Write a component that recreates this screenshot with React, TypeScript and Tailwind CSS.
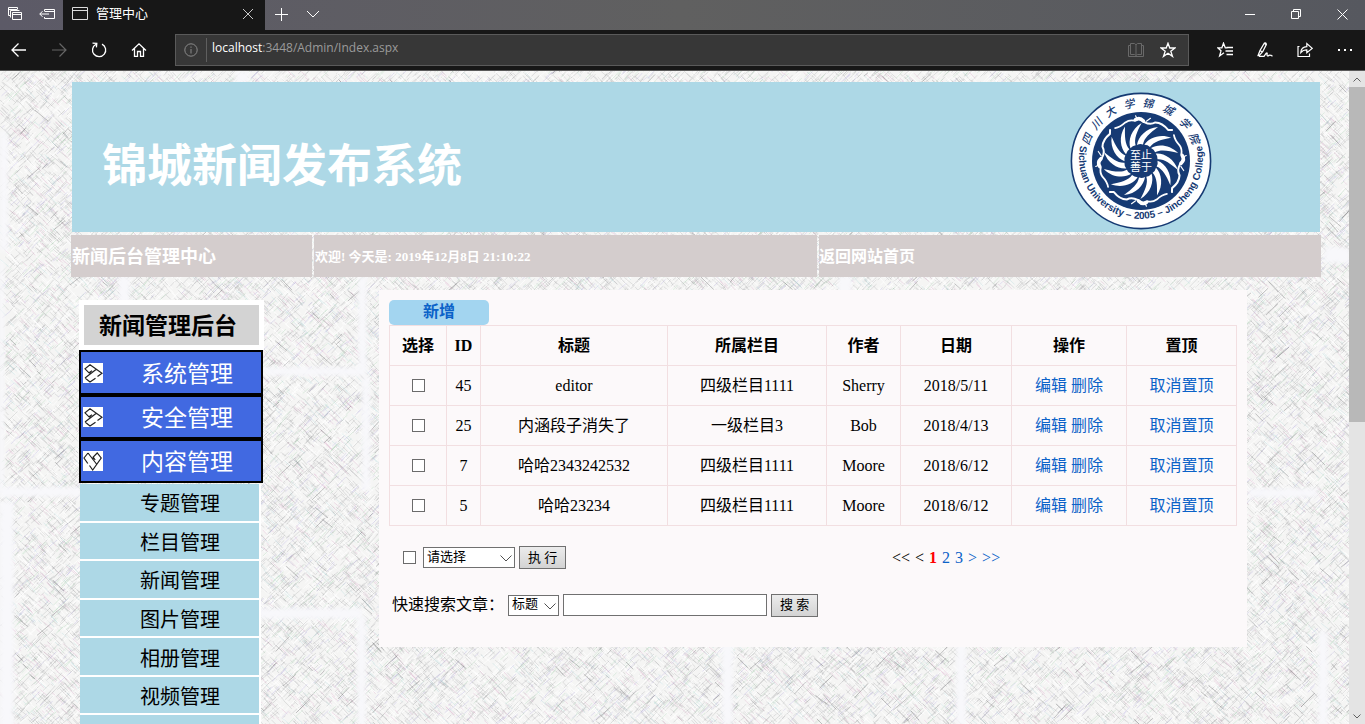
import React from "react";

const PAGE_FONT = "font-['Liberation_Serif','Noto_Sans_CJK_SC',serif]";
const UI_FONT = "font-['Open_Sans','Noto_Sans_CJK_SC',sans-serif]";

/* ---------- sketched wall texture ---------- */

const TILE_W = 1349;
const TILE_H = 654;

function makeStrokes(seed: number, count: number, slope: number, min: number, max: number) {
  let s = seed;
  const rnd = () => {
    s = (s * 1664525 + 1013904223) % 4294967296;
    return s / 4294967296;
  };
  let d = "";
  for (let i = 0; i < count; i++) {
    const x = rnd() * TILE_W;
    const y = rnd() * TILE_H;
    const len = min + rnd() * (max - min);
    const k = slope * (0.8 + rnd() * 0.35);
    d += `M${x.toFixed(1)} ${y.toFixed(1)}l${len.toFixed(1)} ${(len * k).toFixed(1)}`;
  }
  return d;
}

const STROKES = [
  { d: makeStrokes(11, 14000, 1, 3, 11), color: "#9a9b9e", opacity: 0.3 },
  { d: makeStrokes(23, 14000, -1, 3, 11), color: "#9a9b9e", opacity: 0.3 },
  { d: makeStrokes(71, 13000, 1, 3, 11), color: "#ffffff", opacity: 0.75 },
  { d: makeStrokes(79, 13000, -1, 3, 11), color: "#ffffff", opacity: 0.75 },
  { d: makeStrokes(37, 5000, 1, 2, 9), color: "#dba6c6", opacity: 0.36 },
  { d: makeStrokes(41, 5000, -1, 2, 9), color: "#a0d0ac", opacity: 0.32 },
  { d: makeStrokes(53, 5000, -1, 2, 9), color: "#b3abdf", opacity: 0.36 },
  { d: makeStrokes(67, 4000, 1, 2, 9), color: "#a6d5d8", opacity: 0.32 },
  { d: makeStrokes(131, 4000, 1, 3, 10), color: "#86878b", opacity: 0.24 },
  { d: makeStrokes(149, 4000, -1, 3, 10), color: "#86878b", opacity: 0.24 },
  { d: makeStrokes(83, 450, 1, 4, 14), color: "#4a4a4e", opacity: 0.36 },
  { d: makeStrokes(97, 450, -1, 4, 14), color: "#4a4a4e", opacity: 0.36 },
];

const MORTAR: [number, number, number, number][] = [
  [0, 60, 8, 120],
  [0, 190, 4, 230],
  [118, 205, 12, 90],
  [235, 0, 14, 12],
  [358, 205, 9, 95],
  [262, 296, 104, 9],
  [362, 305, 8, 115],
  [0, 416, 82, 10],
  [0, 430, 14, 230],
  [258, 537, 104, 11],
  [357, 545, 9, 110],
  [722, 560, 11, 94],
  [956, 560, 10, 94],
  [838, 205, 14, 20],
  [1324, 176, 26, 16],
  [1248, 417, 70, 10],
  [1318, 560, 10, 94],
];

function WallTexture() {
  return (
    <svg className="absolute inset-0 h-full w-full" aria-hidden="true">
      <defs>
        <filter id="soft" x="-50%" y="-50%" width="200%" height="200%">
          <feGaussianBlur stdDeviation="2" />
        </filter>
        <pattern id="wall" width={TILE_W} height={TILE_H} patternUnits="userSpaceOnUse">
          <rect width={TILE_W} height={TILE_H} fill="#f5f5f4" />
          {STROKES.map((s, i) => (
            <path key={i} d={s.d} stroke={s.color} strokeOpacity={s.opacity} strokeWidth="0.9" fill="none" />
          ))}
          {MORTAR.map(([x, y, w, h], i) => (
            <rect key={i} x={x} y={y} width={w} height={h} fill="#f8f8fb" filter="url(#soft)" />
          ))}
        </pattern>
      </defs>
      <rect width="100%" height="100%" fill="url(#wall)" />
    </svg>
  );
}

/* ---------- browser frame ---------- */

function Icon({ children, className = "", w = 16, h = 16 }: { children: React.ReactNode; className?: string; w?: number; h?: number }) {
  return (
    <svg width={w} height={h} viewBox={`0 0 ${w} ${h}`} fill="none" stroke="currentColor" className={className} aria-hidden="true">
      {children}
    </svg>
  );
}

function TabBar() {
  return (
    <div className="flex h-[30px] shrink-0 items-stretch bg-linear-to-r from-[#5c5a67] via-[#606060] to-[#56585f] pb-0.5 text-white">
      <div className="flex w-[63px] items-center gap-4 pl-[7px]">
        <button aria-label="标签页">
          <Icon>
            <path d="M1.5 9.5V1.5H10.5V3.5M1.5 3.5H10M3.5 11.5V4.5M1.5 9.5H3.5M3.5 4.5H12.5M5.5 6.5H14.5V13.5H5.5zM5.5 8.5H14.5" />
          </Icon>
        </button>
        <button aria-label="搁置标签页">
          <Icon>
            <path d="M5.5 5V3.5H15.5V12.5H5.5V11M5.5 5.5H15.5M.8 8H10M3.5 5.2L.8 8L3.5 10.8" />
          </Icon>
        </button>
      </div>
      <div className="-mb-0.5 flex w-[202px] items-center bg-[#171717] pr-[11px] pb-0.5 pl-[9px]">
        <Icon>
          <path d="M.5 1.5H15.5V13.5H.5zM.5 4.5H15.5" stroke="#dcdcdc" />
        </Icon>
        <span className="ml-2 flex-1 text-[13px] leading-4">管理中心</span>
        <button aria-label="关闭标签页">
          <Icon w={12} h={12}>
            <path d="M1 1L11 11M11 1L1 11" stroke="#c8c8c8" />
          </Icon>
        </button>
      </div>
      <div className="flex flex-1 items-center gap-[18px] pl-[9px]">
        <button aria-label="新建标签页">
          <Icon w={14} h={14}>
            <path d="M7.5 1V14M1 7.5H14" />
          </Icon>
        </button>
        <button aria-label="标签预览">
          <Icon w={14} h={8}>
            <path d="M1 1L7 7L13 1" />
          </Icon>
        </button>
      </div>
      <div className="flex items-center gap-9 pr-[17px]">
        <button aria-label="最小化">
          <Icon w={10} h={10}>
            <path d="M0 5.5H10" />
          </Icon>
        </button>
        <button aria-label="还原">
          <Icon w={10} h={10}>
            <path d="M.5 2.5H7.5V9.5H.5zM2.5 2.5V.5H9.5V7.5H7.5" />
          </Icon>
        </button>
        <button aria-label="关闭">
          <Icon w={11} h={11}>
            <path d="M.5 .5L10.5 10.5M10.5 .5L.5 10.5" />
          </Icon>
        </button>
      </div>
    </div>
  );
}

function AddressBar() {
  return (
    <div className="flex h-[41px] shrink-0 items-center border-b border-[#5a5a5a] bg-[#171717] text-white">
      <div className="flex items-center gap-6 pl-[11px]">
        <button aria-label="后退">
          <Icon>
            <path d="M15 8H1M7.5 1.5L1 8L7.5 14.5" strokeWidth="1.3" />
          </Icon>
        </button>
        <button aria-label="前进" className="text-[#666]">
          <Icon>
            <path d="M1 8H15M8.5 1.5L15 8L8.5 14.5" strokeWidth="1.2" />
          </Icon>
        </button>
        <button aria-label="刷新">
          <Icon>
            <path d="M5 2.2A6.6 6.6 0 1 0 11 2.1M1.5 1.2L5.8 1.4L5.4 5.4" strokeWidth="1.3" />
          </Icon>
        </button>
        <button aria-label="主页">
          <Icon>
            <path d="M1 8.5L8 1.8L15 8.5M3.5 6.5V14.4H6.5V9.5H9.5V14.4H12.5V6.5" strokeWidth="1.3" />
          </Icon>
        </button>
      </div>
      <div className="ml-7 flex h-8 flex-1 items-center border border-[#5a5a5a] bg-[#373737] pr-3 pl-2">
        <Icon w={14} h={14} className="text-[#8a8a8a]">
          <circle cx="7" cy="7" r="6.2" />
          <path d="M7 6V10.5M7 3.5V4.8" />
        </Icon>
        <div className={`ml-2 flex h-6 flex-1 items-center border-l border-[#5f5f5f] pl-[5px] text-xs leading-4 ${UI_FONT}`}>
          <p className="pb-1 text-[#9b9b9b]">
            <span className="text-white">localhost</span>:3448/Admin/Index.aspx
          </p>
        </div>
        <button aria-label="阅读视图" className="text-[#696969]">
          <Icon>
            <path d="M2.5 1.5H6.5L8 2.8L9.5 1.5H13.5V12.5H9.5L8 13.5L6.5 12.5H2.5zM8 2.8V13M2.5 3.5H.5V14.5H15.5V3.5H13.5" />
          </Icon>
        </button>
        <button aria-label="收藏" className="ml-4">
          <Icon>
            <path d="M8 1.2L9.8 6H15L10.8 9.2L12.5 14.4L8 11.2L3.5 14.4L5.2 9.2L1 6H6.2z" strokeWidth="1.3" />
          </Icon>
        </button>
      </div>
      <div className="flex items-center gap-6 pr-3 pl-7">
        <button aria-label="收藏夹">
          <Icon>
            <path d="M10.5 5.8H8.3L6.5 1.2L4.9 5.8H.8L4 8.8L2.6 14L7 10.8M9.5 5.5H16M8.5 9H16M9.5 12.5H16" strokeWidth="1.3" />
          </Icon>
        </button>
        <button aria-label="添加笔记">
          <Icon>
            <path d="M.8 14.2L3 8.5L7.3 1.2Q9.2 .4 9.3 2.6L5.8 9.5L1.8 14.2M7.3 1.2L9.2 2.8M3 8.5L5.4 10M2 14.4H7L9.2 11.2Q10.6 10.4 10 12.6Q10 14.6 12 13.4Q13.4 12.8 15.5 14.2" strokeWidth="1.3" />
          </Icon>
        </button>
        <button aria-label="共享">
          <Icon>
            <path d="M2.5 4.5H1V14.5H12.5V11.5M3.8 10.5Q4.2 4.8 9.8 4.6V1.6L15.2 6.4L9.8 10.8V7.8Q6.2 7.6 3.8 10.5z" strokeWidth="1.2" />
          </Icon>
        </button>
        <button aria-label="更多">
          <Icon>
            <path d="M1 8H3M7 8H9M13 8H15" strokeWidth="2" />
          </Icon>
        </button>
      </div>
    </div>
  );
}

function ScrollBar() {
  return (
    <div className="flex w-4 shrink-0 flex-col bg-[#e4e4e4] text-[#606060]" aria-hidden="true">
      <span className="flex h-4 items-center justify-center">
        <Icon w={8} h={5}>
          <path d="M.5 4.5L4 1L7.5 4.5" />
        </Icon>
      </span>
      <div className="flex-1">
        <div className="h-[54%] bg-[#b8b8b8]" />
      </div>
      <span className="flex h-4 items-center justify-center">
        <Icon w={8} h={5}>
          <path d="M.5 .5L4 4L7.5 .5" />
        </Icon>
      </span>
    </div>
  );
}

/* ---------- page header ---------- */

const RING_TEXT: [string, number][] = [
  ["四", -68],
  ["川", -50],
  ["大", -32],
  ["学", -12],
  ["锦", 7],
  ["城", 28],
  ["学", 49],
  ["院", 67],
];

const NAVY = "#163a73";

function CollegeSeal() {
  const blades = Array.from({ length: 14 }, (_, i) => (i * 360) / 14);
  return (
    <svg width="142" height="138" viewBox="-71 -69 142 138" role="img" aria-label="四川大学锦城学院">
      <ellipse rx="69.6" ry="67.6" fill="#fff" stroke={NAVY} strokeWidth="1.6" />
      <circle r="49" fill={NAVY} />
      {blades.map((a) => (
        <path key={a} transform={`rotate(${a})`} d="M-4 -16C-3 -24 5 -33 17 -34C9 -28 3 -23 2 -16.5Q-1 -17.5 -4 -16z" fill="#fff" />
      ))}
      {[0, 90, 180, 270].map((a) => (
        <g key={a} transform={`rotate(${a + 2})`} fill="none" stroke="#fff" strokeLinecap="round" strokeLinejoin="round">
          <path d="M-27 -32Q-22 -33 -17 -38Q-13 -41 -8 -40" strokeWidth="1.8" />
          <path d="M-7 -41Q-3 -44 1 -40" strokeWidth="3.6" />
          <path d="M2 -39Q8 -36 13 -39Q20 -39 26 -32L30 -32" strokeWidth="2" />
          <path d="M-5 -41L-7 -45M4 -40L8 -43" strokeWidth="1.2" />
        </g>
      ))}
      <g className="font-['Noto_Sans_CJK_SC',sans-serif] text-[11px]" fill="#fff" textAnchor="middle">
        <text y="-2">至止</text>
        <text y="10">善于</text>
      </g>
      <g className="font-['Noto_Sans_CJK_SC',sans-serif] text-[11px] font-medium italic" fill={NAVY} textAnchor="middle">
        {RING_TEXT.map(([ch, a]) => (
          <text key={a} transform={`rotate(${a})`} y="-54">
            {ch}
          </text>
        ))}
      </g>
      <path id="ring" d="M-61 -14A62 61 0 1 0 61 -14" fill="none" />
      <text className="font-['Liberation_Sans',sans-serif] text-[10px] font-bold" fill={NAVY} textAnchor="middle">
        <textPath href="#ring" startOffset="50%">
          Sichuan University – 2005 – Jincheng College
        </textPath>
      </text>
    </svg>
  );
}

function Header() {
  return (
    <header className="pr-[28px] pl-[71px] text-white">
      <div className="mx-px flex h-[150px] items-center justify-between bg-[#add8e6] pr-[108px] pl-[30px]">
        <h1 className="pt-5 text-[45px] leading-[60px] font-bold">锦城新闻发布系统</h1>
        <div className="pt-2">
          <CollegeSeal />
        </div>
      </div>
      <div className="mt-[3px] grid h-[42px] grid-cols-[241fr_503fr_502fr] gap-x-0.5 font-bold">
        <div className="flex items-center bg-[#d4cdcd] pt-0.5 pl-px text-lg">新闻后台管理中心</div>
        <div className="flex items-center bg-[#d4cdcd] pt-0.5 pl-px text-[13px]">欢迎! 今天是: 2019年12月8日 21:10:22</div>
        <div className="flex items-center bg-[#d4cdcd] pt-0.5 text-base">
          <a href="#home">返回网站首页</a>
        </div>
      </div>
    </header>
  );
}

/* ---------- sidebar ---------- */

function Lattice({ open }: { open?: boolean }) {
  return (
    <svg width="20" height="20" viewBox="0 0 20 20" className={open ? "-mt-1 rotate-90 bg-white" : "-mt-1 bg-white"} aria-hidden="true">
      <path
        d="M14.5 13.5L19 10.3L7 1.8L2 5.8L6 9.8L9 7.8M2 15L13 6.5M2 15L7 19L12.5 15.2M6 9.8L9 10"
        fill="none"
        stroke="#222"
        strokeWidth="1.2"
      />
    </svg>
  );
}

const GROUPS = ["系统管理", "安全管理", "内容管理"];
const ITEMS = ["专题管理", "栏目管理", "新闻管理", "图片管理", "相册管理", "视频管理"];

function Sidebar() {
  return (
    <aside className="mt-[23px] ml-[79px] w-[185px] shrink-0">
      <h2 className="h-[50px] border-5 border-white bg-[#d3d3d3] pl-[15px] text-[23px] leading-11 font-bold text-black">新闻管理后台</h2>
      <div className="mr-px">
        {GROUPS.map((name, i) => (
          <button
            key={name}
            className="flex h-11 w-full items-center gap-[38px] border-2 border-black bg-[#4169e1] pt-1 pl-0.5 text-[23px] leading-8 text-white first:h-[45px]"
          >
            <Lattice open={i === 2} />
            {name}
          </button>
        ))}
      </div>
      <ul className="mt-px ml-px grid h-[270px] w-[181px] grid-rows-7">
        {ITEMS.map((name) => (
          <li key={name} className="flex items-center border-r-2 border-b-2 border-white bg-[#add8e6] pt-1 pl-15 text-xl text-black">
            <a href="#item">{name}</a>
          </li>
        ))}
        <li className="border-r-2 border-white bg-[#add8e6]" />
      </ul>
    </aside>
  );
}

/* ---------- main panel ---------- */

const COLUMNS: [string, string][] = [
  ["选择", "w-[57px]"],
  ["ID", "w-[34px]"],
  ["标题", "w-[187px]"],
  ["所属栏目", "w-[159px]"],
  ["作者", "w-[74px]"],
  ["日期", "w-[111px]"],
  ["操作", "w-[115px]"],
  ["置顶", "w-[110px]"],
];

const ROWS: [string, string, string, string, string][] = [
  ["45", "editor", "四级栏目1111", "Sherry", "2018/5/11"],
  ["25", "内涵段子消失了", "一级栏目3", "Bob", "2018/4/13"],
  ["7", "哈哈2343242532", "四级栏目1111", "Moore", "2018/6/12"],
  ["5", "哈哈23234", "四级栏目1111", "Moore", "2018/6/12"],
];

const CELL = "h-10 border border-[#f2dfe1] p-0 leading-6";

function Check({ label }: { label: string }) {
  return (
    <input
      type="checkbox"
      aria-label={label}
      className="block size-[13px] appearance-none border border-[#6b6b6b] bg-white checked:bg-[#0b62c8]"
    />
  );
}

function Picker({ id, label, options, width }: { id: string; label?: string; options: string[]; width: string }) {
  return (
    <span className="relative flex">
      <select
        id={id}
        aria-label={label}
        className={`h-[21px] appearance-none border border-[#707070] bg-white pb-0.5 pl-[3px] text-[13px] leading-4 text-black ${width}`}
      >
        {options.map((o) => (
          <option key={o}>{o}</option>
        ))}
      </select>
      <Icon w={12} h={7} className="pointer-events-none absolute top-2 right-[3px] text-[#505050]">
        <path d="M.5 .5L6 6L11.5 .5" />
      </Icon>
    </span>
  );
}

function FormButton({ children }: { children: React.ReactNode }) {
  return (
    <button className="h-[23px] border border-[#707070] bg-linear-to-b from-[#ececec] to-[#d3d3d3] px-2 text-[13px] leading-5 text-black">
      {children}
    </button>
  );
}

function Panel() {
  return (
    <main className="mt-[13px] mr-[102px] ml-[115px] flex-1 self-start bg-[#fcf9fa] p-[10px] pb-[30px] text-base text-black">
      <a
        href="#add"
        className="block h-[25px] w-[100px] rounded-[5px] bg-[#a3d5f0] text-center leading-6 font-bold text-[#0b62c8]"
      >
        新增
      </a>
      <table className="w-full table-fixed border-collapse text-center">
        <thead>
          <tr>
            {COLUMNS.map(([name, width]) => (
              <th key={name} scope="col" className={`${CELL} ${width}`}>
                {name}
              </th>
            ))}
          </tr>
        </thead>
        <tbody>
          {ROWS.map((row) => (
            <tr key={row[0]}>
              <td className={CELL}>
                <div className="flex justify-center">
                  <Check label={`选择 ${row[0]}`} />
                </div>
              </td>
              {row.map((v, i) => (
                <td key={i} className={CELL}>
                  {v}
                </td>
              ))}
              <td className={`${CELL} text-[#0b62c8]`}>
                <a href="#edit">编辑</a> <a href="#delete">删除</a>
              </td>
              <td className={`${CELL} text-[#0b62c8]`}>
                <a href="#untop">取消置顶</a>
              </td>
            </tr>
          ))}
        </tbody>
      </table>
      <div className="mt-5 grid grid-cols-[503fr_345fr] items-center">
        <form className="flex items-center gap-1 pl-[14px]" onSubmit={(e) => e.preventDefault()}>
          <span className="mr-[3px]">
            <Check label="全选" />
          </span>
          <Picker id="batch" label="批量操作" options={["请选择"]} width="w-[92px]" />
          <FormButton>执 行</FormButton>
        </form>
        <nav className="flex gap-[5px] leading-5 text-[#0b62c8]" aria-label="分页">
          <span className="text-black">&lt;&lt;</span>
          <span className="text-black">&lt;</span>
          <span className="font-bold text-[#ff0000]">1</span>
          <a href="#p2">2</a>
          <a href="#p3">3</a>
          <a href="#next">&gt;</a>
          <a href="#last">&gt;&gt;</a>
        </nav>
      </div>
      <form className="mt-6 flex items-center gap-1 pl-[3px]" onSubmit={(e) => e.preventDefault()}>
        <label htmlFor="keyword" className="leading-6">
          快速搜索文章：
        </label>
        <Picker id="field" label="搜索字段" options={["标题"]} width="w-[51px]" />
        <input id="keyword" type="text" className="h-[22px] w-[204px] border border-[#707070] bg-white px-0.5 text-[13px]" />
        <FormButton>搜 索</FormButton>
      </form>
    </main>
  );
}

export default function App() {
  return (
    <div className={`flex h-screen flex-col overflow-hidden ${PAGE_FONT}`}>
      <TabBar />
      <AddressBar />
      <div className="flex min-h-0 flex-1">
        <div className="relative min-w-0 flex-1 overflow-hidden">
          <WallTexture />
          <div className="relative pt-[11px]">
            <Header />
            <div className="flex">
              <Sidebar />
              <Panel />
            </div>
          </div>
        </div>
        <ScrollBar />
      </div>
    </div>
  );
}
